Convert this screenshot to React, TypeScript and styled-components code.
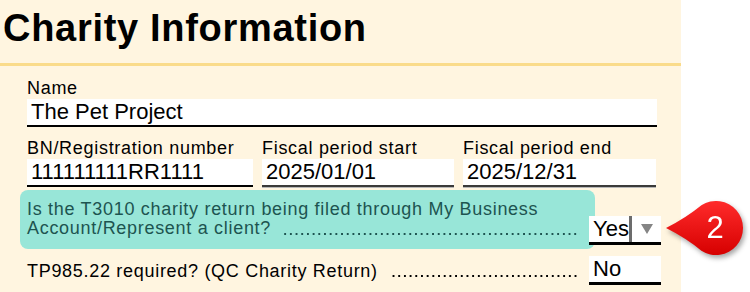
import React from 'react';
import styled, { createGlobalStyle } from 'styled-components';

const GlobalStyle = createGlobalStyle`
  html, body {
    margin: 0;
    padding: 0;
    background: #fff;
  }
  body {
    font-family: 'Liberation Sans', Arial, sans-serif;
    color: #000;
  }
`;

const Page = styled.div`
  position: relative;
  display: flex;
  height: 100vh;
  min-height: 292px;
`;

const Panel = styled.section`
  width: 681px;
  background: #fff5e0;
`;

const Title = styled.h1`
  margin: 0;
  padding: 5.5px 0 13.5px 3px;
  font-size: 38px;
  line-height: 44px;
  font-weight: 700;
  letter-spacing: 0.7px;
  border-bottom: 3px solid #fadb8a;
`;

const Form = styled.div`
  width: 634px;
  padding: 12px 0 0 27px;
`;

const Field = styled.div``;

const Label = styled.div`
  font-size: 18px;
  line-height: 20px;
  letter-spacing: 0.7px;
  margin-bottom: 1px;
  white-space: nowrap;
`;

const Input = styled.div<{ $w: number; $soft?: boolean }>`
  box-sizing: border-box;
  width: ${(p) => p.$w}px;
  height: 28px;
  padding-left: 4px;
  background: #fff;
  border-bottom: 2px solid ${(p) => (p.$soft ? '#3a3a3a' : '#000')};
  box-shadow: ${(p) => (p.$soft ? '0 1px 0 #b8b8b8' : 'none')};
  font-size: 22px;
  line-height: 26px;
  white-space: nowrap;
  overflow: hidden;
`;

const Row = styled.div`
  display: flex;
  gap: 9px;
  margin-top: 11px;
`;

const LeaderRow = styled.div<{ $top: number }>`
  position: relative;
  display: flex;
  align-items: flex-start;
  margin-top: ${(p) => p.$top}px;
  font-size: 18px;
  line-height: 19px;
  letter-spacing: 0.7px;
`;

const Highlight = styled.div`
  position: absolute;
  left: -7px;
  top: 0;
  width: 575px;
  height: 59px;
  border-radius: 8px;
  background: #98e6d8;
  z-index: 0;
`;

const Question = styled.div<{ $pad: number; $tone?: boolean }>`
  position: relative;
  z-index: 1;
  flex: 1;
  min-width: 0;
  padding-top: ${(p) => p.$pad}px;
  color: ${(p) => (p.$tone ? '#1d5450' : '#000')};
  white-space: nowrap;
`;

const Line = styled.div`
  display: flex;
`;

/* dotted leader drawn as a repeating square dot sitting on the baseline */
const Leader = styled.span`
  flex: 1;
  min-width: 0;
  height: 19px;
  margin: 0 9px 0 12px;
  background-image: linear-gradient(to right, currentColor 2px, transparent 2px);
  background-size: 5.7px 2px;
  background-repeat: repeat-x;
  background-position: right 0 top 13.5px;
`;

const Select = styled.div<{ $top: number }>`
  position: relative;
  z-index: 1;
  display: flex;
  box-sizing: border-box;
  width: 72px;
  height: 29px;
  margin-top: ${(p) => p.$top}px;
  background: #fff;
  border-bottom: 3px solid #000;
  font-size: 22px;
  line-height: 26px;
  letter-spacing: 0;
`;

const Value = styled.span`
  flex: 1;
  min-width: 0;
  overflow: hidden;
  padding-left: 4px;
`;

const Arrow = styled.span`
  display: flex;
  align-items: center;
  justify-content: center;
  width: 32px;
  box-sizing: border-box;
  border-left: 3px solid #6c6c6c;

  &::after {
    content: '';
    border-left: 6px solid transparent;
    border-right: 6px solid transparent;
    border-top: 10px solid #858585;
  }
`;

const Badge = styled.svg`
  position: absolute;
  left: 660px;
  top: 192px;
  overflow: visible;
  filter: drop-shadow(2px 3px 2.5px rgba(0, 0, 0, 0.35));
`;

const BadgeText = styled.text`
  font-family: 'Liberation Sans', Arial, sans-serif;
  font-size: 31px;
  fill: #fff;
`;

const Callout = ({ n }: { n: number }) => (
  <Badge width="90" height="72" viewBox="0 0 90 72">
    <defs>
      <linearGradient id="badgeRed" x1="0" y1="0" x2="0" y2="1">
        <stop offset="0" stopColor="#ff2b2b" />
        <stop offset="1" stopColor="#d60000" />
      </linearGradient>
    </defs>
    <path
      d="M 6 36 Q 26 26 41.4 13.3 A 27 27 0 1 1 41.4 58.7 Q 26 46 6 36 Z"
      fill="url(#badgeRed)"
    />
    <BadgeText x="55" y="46" textAnchor="middle">
      {n}
    </BadgeText>
  </Badge>
);

export default function App() {
  return (
    <>
      <GlobalStyle />
      <Page>
        <Panel>
          <Title>Charity Information</Title>
          <Form>
            <Field>
              <Label>Name</Label>
              <Input $w={630}>The Pet Project</Input>
            </Field>
            <Row>
              <Field>
                <Label>BN/Registration number</Label>
                <Input $w={226}>111111111RR1111</Input>
              </Field>
              <Field>
                <Label>Fiscal period start</Label>
                <Input $w={192} $soft>2025/01/01</Input>
              </Field>
              <Field>
                <Label>Fiscal period end</Label>
                <Input $w={193} $soft>2025/12/31</Input>
              </Field>
            </Row>
            <LeaderRow $top={3}>
              <Highlight />
              <Question $pad={10} $tone>
                <div>Is the T3010 charity return being filed through My Business</div>
                <Line>
                  <span>Account/Represent a client?</span>
                  <Leader />
                </Line>
              </Question>
              <Select $top={26}>
                <Value>Yes</Value>
                <Arrow />
              </Select>
            </LeaderRow>
            <LeaderRow $top={11}>
              <Question $pad={5.5}>
                <Line>
                  <span>TP985.22 required? (QC Charity Return)</span>
                  <Leader />
                </Line>
              </Question>
              <Select $top={0}>
                <Value>No</Value>
              </Select>
            </LeaderRow>
          </Form>
        </Panel>
        <Callout n={2} />
      </Page>
    </>
  );
}
